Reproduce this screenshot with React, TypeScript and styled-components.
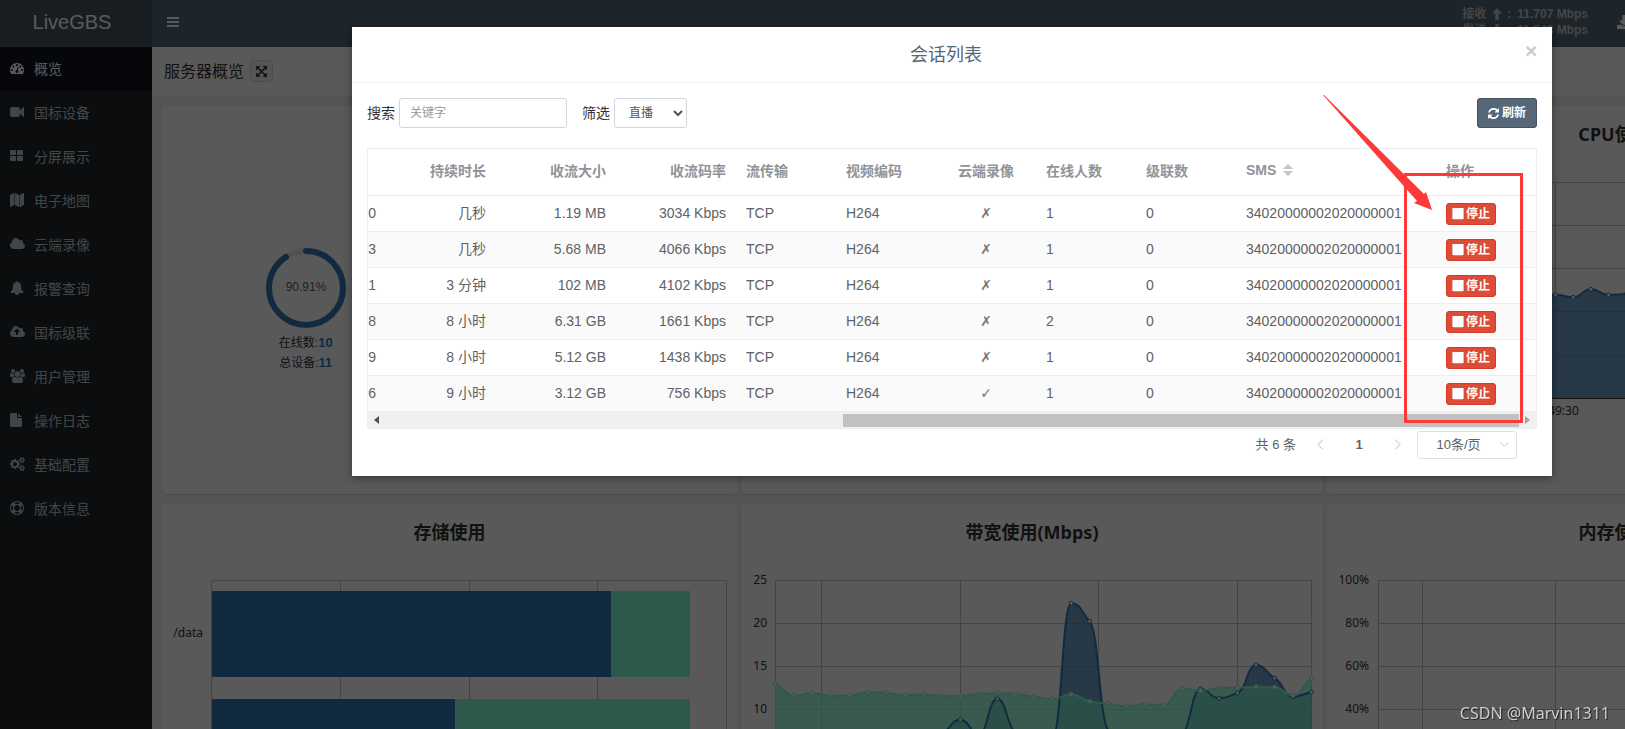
import React from 'react';
import styled, { createGlobalStyle } from 'styled-components';
import { FaDownload } from 'react-icons/fa';

const latin = '"Liberation Sans", "Noto Sans CJK SC", sans-serif';
const chartFont = '"Noto Sans", "Noto Sans CJK SC", sans-serif';

const Global = createGlobalStyle`
  *, *::before, *::after { box-sizing: border-box; }
  html, body { margin: 0; height: 100%; overflow: hidden; }
  body { font-family: ${latin}; font-size: 14px; color: #333; background: #ecf0f5; }
  h1, h2, h3, p { margin: 0; }
  button, input, select { font-family: inherit; }
`;

/* ---------- icons ---------- */

const paths = {
  dash: ['0 0 1792 1792', 'M384 1152q0-53-37.5-90.5t-90.5-37.5-90.5 37.5-37.5 90.5 37.5 90.5 90.5 37.5 90.5-37.5 37.5-90.5zm192-448q0-53-37.5-90.5t-90.5-37.5-90.5 37.5-37.5 90.5 37.5 90.5 90.5 37.5 90.5-37.5 37.5-90.5zm428 481l101-382q6-26-7.5-48.5t-38.5-29.5-48 6.5-30 39.5l-101 382q-60 5-107 43.5t-63 98.5q-20 77 20 146t117 89 146-20 89-117q16-60-6-117t-72-91zm660-33q0-53-37.5-90.5t-90.5-37.5-90.5 37.5-37.5 90.5 37.5 90.5 90.5 37.5 90.5-37.5 37.5-90.5zm-640-640q0-53-37.5-90.5t-90.5-37.5-90.5 37.5-37.5 90.5 37.5 90.5 90.5 37.5 90.5-37.5 37.5-90.5zm448 192q0-53-37.5-90.5t-90.5-37.5-90.5 37.5-37.5 90.5 37.5 90.5 90.5 37.5 90.5-37.5 37.5-90.5zm320 448q0 261-141 483-19 29-54 29h-1402q-35 0-54-29-141-221-141-483 0-182 71-348t191-286 286-191 348-71 348 71 286 191 191 286 71 348z'],
  video: ['0 0 1792 1792', 'M1792 352v1088q0 42-39 59-13 5-25 5-27 0-45-19l-403-403v166q0 119-84.5 203.5t-203.5 84.5h-704q-119 0-203.5-84.5t-84.5-203.5v-704q0-119 84.5-203.5t203.5-84.5h704q119 0 203.5 84.5t84.5 203.5v165l403-402q18-19 45-19 12 0 25 5 39 17 39 59z'],
  grid: ['0 0 1792 1792', 'M768 1024v384q0 52-38 90t-90 38h-512q-52 0-90-38t-38-90v-384q0-52 38-90t90-38h512q52 0 90 38t38 90zm0-768v384q0 52-38 90t-90 38h-512q-52 0-90-38t-38-90v-384q0-52 38-90t90-38h512q52 0 90 38t38 90zm896 768v384q0 52-38 90t-90 38h-512q-52 0-90-38t-38-90v-384q0-52 38-90t90-38h512q52 0 90 38t38 90zm0-768v384q0 52-38 90t-90 38h-512q-52 0-90-38t-38-90v-384q0-52 38-90t90-38h512q52 0 90 38t38 90z'],
  map: ['0 0 1792 1792', 'M512 0q13 0 22.5 9.5t9.5 22.5v1472q0 20-17 28l-480 256q-7 4-15 4-13 0-22.5-9.5t-9.5-22.5v-1472q0-20 17-28l480-256q7-4 15-4zm1248 0q13 0 22.5 9.5t9.5 22.5v1472q0 20-17 28l-480 256q-7 4-15 4-13 0-22.5-9.5t-9.5-22.5v-1472q0-20 17-28l480-256q7-4 15-4zm-1120 0q8 0 14 3l512 256q18 10 18 29v1472q0 13-9.5 22.5t-22.5 9.5q-8 0-14-3l-512-256q-18-10-18-29v-1472q0-13 9.5-22.5t22.5-9.5z'],
  cloud: ['64 0 1920 1792', 'M1984 1152q0 159-112.5 271.5t-271.5 112.5h-1088q-185 0-316.5-131.5t-131.5-316.5q0-132 71-241.5t187-163.5q-2-28-2-43 0-212 150-362t362-150q158 0 286.5 88t187.5 230q70-62 166-62 106 0 181 75t75 181q0 75-41 138 129 30 213 134.5t84 239.5z'],
  bell: ['0 0 1792 1792', 'M1728 1408q0 52-38 90t-90 38h-448q0 106-75 181t-181 75-181-75-75-181h-448q-52 0-90-38t-38-90q50-42 91-88t85-119.5 74.5-158.5 50-206 19.5-260q0-152 117-282.5t307-158.5q-8-19-8-39 0-40 28-68t68-28 68 28 28 68q0 20-8 39 190 28 307 158.5t117 282.5q0 139 19.5 260t50 206 74.5 158.5 85 119.5 91 88z'],
  upload: ['64 0 1920 1792', 'M1344 864q0-14-9-23l-352-352q-9-9-23-9t-23 9l-351 351q-10 12-10 24 0 14 9 23t23 9h224v352q0 13 9.5 22.5t22.5 9.5h192q13 0 22.5-9.5t9.5-22.5v-352h224q13 0 22.5-9.5t9.5-22.5zm640 288q0 159-112.5 271.5t-271.5 112.5h-1088q-185 0-316.5-131.5t-131.5-316.5q0-130 70-240t188-165q-2-30-2-43 0-212 150-362t362-150q156 0 285.5 87t188.5 231q71-62 166-62 106 0 181 75t75 181q0 76-41 138 130 31 213.5 135.5t83.5 238.5z'],
  users: ['0 0 1920 1792', 'M593 896q-162 5-265 128h-134q-82 0-138-40.5t-56-118.5q0-353 124-353 6 0 43.5 21t97.5 42.5 119 21.5q67 0 133-23-5 37-5 66 0 139 81 256zm1071 637q0 120-73 189.5t-194 69.5h-874q-121 0-194-69.5t-73-189.5q0-53 3.5-103.5t14-109 26.5-108.5 43-97.5 62-81 85.5-53.5 111.5-20q10 0 43 21.5t73 48 107 48 135 21.5 135-21.5 107-48 73-48 43-21.5q61 0 111.5 20t85.5 53.5 62 81 43 97.5 26.5 108.5 14 109 3.5 103.5zm-1024-1277q0 106-75 181t-181 75-181-75-75-181 75-181 181-75 181 75 75 181zm704 384q0 159-112.5 271.5t-271.5 112.5-271.5-112.5-112.5-271.5 112.5-271.5 271.5-112.5 271.5 112.5 112.5 271.5zm576 225q0 78-56 118.5t-138 40.5h-134q-103-123-265-128 81-117 81-256 0-29-5-66 66 23 133 23 59 0 119-21.5t97.5-42.5 43.5-21q124 0 124 353zm-128-609q0 106-75 181t-181 75-181-75-75-181 75-181 181-75 181 75 75 181z'],
  file: ['0 0 1792 1792', 'M1024 512v-472q22 14 36 28l408 408q14 14 28 36h-472zm-128 32q0 40 28 68t68 28h544v1056q0 40-28 68t-68 28h-1344q-40 0-68-28t-28-68v-1600q0-40 28-68t68-28h800v544z'],
  cogs: ['0 0 1920 1792', 'M896 896q0-106-75-181t-181-75-181 75-75 181 75 181 181 75 181-75 75-181zm768 512q0-52-38-90t-90-38-90 38-38 90q0 53 37.5 90.5t90.5 37.5 90.5-37.5 37.5-90.5zm0-1024q0-52-38-90t-90-38-90 38-38 90q0 53 37.5 90.5t90.5 37.5 90.5-37.5 37.5-90.5zm-384 421v185q0 10-7 19.5t-16 10.5l-155 24q-11 35-32 76 34 48 90 115 7 11 7 20 0 12-7 19-23 30-82.5 89.5t-78.5 59.5q-11 0-21-7l-115-90q-37 19-77 31-11 108-23 155-7 24-30 24h-186q-11 0-20-7.5t-10-17.5l-23-153q-34-10-75-31l-118 89q-7 7-20 7-11 0-21-8-144-133-144-160 0-9 7-19 10-14 41-53t47-61q-23-44-35-82l-152-24q-10-1-17-9.5t-7-19.5v-185q0-10 7-19.5t16-10.5l155-24q11-35 32-76-34-48-90-115-7-11-7-20 0-12 7-20 22-30 82-89t79-59q11 0 21 7l115 90q34-18 77-32 11-108 23-154 7-24 30-24h186q11 0 20 7.5t10 17.5l23 153q34 10 75 31l118-89q8-7 20-7 11 0 21 8 144 133 144 160 0 9-7 19-12 16-42 54t-45 60q23 48 34 82l152 23q10 2 17 10.5t7 19.5zm640 533v140q0 16-149 31-12 27-30 52 51 113 51 138 0 4-4 7-122 71-124 71-8 0-46-47t-52-68q-20 2-30 2t-30-2q-14 21-52 68t-46 47q-2 0-124-71-4-3-4-7 0-25 51-138-18-25-30-52-149-15-149-31v-140q0-16 149-31 13-29 30-52-51-113-51-138 0-4 4-7 4-2 35-20t59-34 30-16q8 0 46 46.5t52 67.5q20-2 30-2t30 2q51-71 92-112l6-2q4 0 124 70 4 3 4 7 0 25-51 138 17 23 30 52 149 15 149 31zm0-1024v140q0 16-149 31-12 27-30 52 51 113 51 138 0 4-4 7-122 71-124 71-8 0-46-47t-52-68q-20 2-30 2t-30-2q-14 21-52 68t-46 47q-2 0-124-71-4-3-4-7 0-25 51-138-18-25-30-52-149-15-149-31v-140q0-16 149-31 13-29 30-52-51-113-51-138 0-4 4-7 4-2 35-20t59-34 30-16q8 0 46 46.5t52 67.5q20-2 30-2t30 2q51-71 92-112l6-2q4 0 124 70 4 3 4 7 0 25-51 138 17 23 30 52 149 15 149 31z'],
  ring: ['0 0 1792 1792', 'M896 0q182 0 348 71t286 191 191 286 71 348-71 348-191 286-286 191-348 71-348-71-286-191-191-286-71-348 71-348 191-286 286-191 348-71zm0 128q-190 0-361 90l194 194q82-28 167-28t167 28l194-194q-171-90-361-90zm-678 1129l194-194q-28-82-28-167t28-167l-194-194q-90 171-90 361t90 361zm678 407q190 0 361-90l-194-194q-82 28-167 28t-167-28l-194 194q171 90 361 90zm0-384q159 0 271.5-112.5t112.5-271.5-112.5-271.5-271.5-112.5-271.5 112.5-112.5 271.5 112.5 271.5 271.5 112.5zm484-217l194 194q90-171 90-361t-90-361l-194 194q28 82 28 167t-28 167z'],
  refresh: ['128 0 1536 1792', 'M1639 1056q0 5-1 7-64 268-268 434.5t-478 166.5q-146 0-282.5-55t-243.5-157l-129 129q-19 19-45 19t-45-19-19-45v-448q0-26 19-45t45-19h448q26 0 45 19t19 45-19 45l-137 137q71 66 161 102t187 36q134 0 250-65t186-179q11-17 53-117 8-23 30-23h192q13 0 22.5 9.5t9.5 22.5zm25-800v448q0 26-19 45t-45 19h-448q-26 0-45-19t-19-45 19-45l138-138q-148-137-349-137-134 0-250 65t-186 179q-11 17-53 117-8 23-30 23h-199q-13 0-22.5-9.5t-9.5-22.5v-7q65-268 270-434.5t480-166.5q146 0 284 55.5t245 156.5l130-129q19-19 45-19t45 19 19 45z'],
  expand: ['128 0 1536 1792', 'M1411 541l-355 355 355 355 144-144q29-31 70-14 39 17 39 59v448q0 26-19 45t-45 19h-448q-42 0-59-40-17-39 14-69l144-144-355-355-355 355 144 144q31 30 14 69-17 40-59 40h-448q-26 0-45-19t-19-45v-448q0-42 40-59 39-17 69 14l144 144 355-355-355-355-144 144q-19 19-45 19-12 0-24-5-40-17-40-59v-448q0-26 19-45t45-19h448q42 0 59 40 17 39-14 69l-144 144 355 355 355-355-144-144q-31-30-14-69 17-40 59-40h448q26 0 45 19t19 45v448q0 42-39 59-13 5-25 5-26 0-45-19z'],
  bars: ['0 0 12 14', 'M0 2h12v2H0zM0 6h12v2H0zM0 10h12v2H0z'],
  up: ['0 0 10 12', 'M5 0l5 5.6H6.8V12H3.2V5.6H0z'],
  down: ['0 0 10 12', 'M5 12l5-5.6H6.8V0H3.2v6.4H0z'],
  stop: ['0 0 12 14', 'M1 1h10a.6.6 0 0 1 .6.6v10a.6.6 0 0 1-.6.6H1a.6.6 0 0 1-.6-.6v-10A.6.6 0 0 1 1 1z'],
} as const;

type IconName = keyof typeof paths;

const IconSvg = styled.svg<{ $h: number }>`
  display: block;
  flex: none;
  height: ${(p) => p.$h}px;
  width: auto;
  fill: currentColor;
`;

const Icon = ({ name, size = 14 }: { name: IconName; size?: number }) => {
  const [box, d] = paths[name];
  return (
    <IconSvg viewBox={box} $h={size} aria-hidden="true">
      <path d={d} />
    </IconSvg>
  );
};

/* ---------- shell ---------- */

const Shell = styled.div`
  position: relative;
  display: grid;
  grid-template-columns: 152px 1fr;
  min-width: 1904px;
  height: 100vh;
  overflow: hidden;
`;

const Sidebar = styled.aside`
  background: #20272b;
`;

const Logo = styled.a`
  display: flex;
  align-items: center;
  justify-content: center;
  height: 47px;
  padding: 0 14px 3px 6px;
  background: #455361;
  color: #fff;
  font-size: 20px;
  text-decoration: none;
`;

const NavItem = styled.a<{ $active?: boolean }>`
  display: flex;
  align-items: center;
  height: 44px;
  padding: 0 10px 2px;
  text-decoration: none;
  color: ${(p) => (p.$active ? '#fff' : '#b8c7ce')};
  background: ${(p) => (p.$active ? '#121620' : 'transparent')};
`;

const NavIcon = styled.span`
  width: 24px;
`;

const Content = styled.div`
  display: flex;
  flex-direction: column;
  min-width: 0;
`;

const TopBar = styled.header`
  display: flex;
  flex: none;
  align-items: center;
  justify-content: space-between;
  height: 47px;
  padding: 0 273px 4px 15px;
  background: #556979;
  color: #fff;
`;

const PlainButton = styled.button`
  display: flex;
  padding: 0;
  border: 0;
  background: none;
  color: inherit;
`;

const TopRight = styled.div`
  display: flex;
  align-items: center;
  gap: 29px;
`;

const Rates = styled.div`
  display: grid;
  grid-template-columns: 30px 15px 10px auto;
  align-items: center;
  font-size: 12px;
  font-weight: bold;
  line-height: 16px;
  color: #c3c6c9;
`;

const TitleBar = styled.div`
  display: flex;
  flex: none;
  align-items: center;
  gap: 6px;
  height: 49px;
  padding: 0 12px 1px;
  background: #fff;
`;

const PageTitle = styled.h1`
  padding-bottom: 2px;
  font-size: 16px;
  font-weight: normal;
`;

const ExpandButton = styled.button`
  display: flex;
  align-items: center;
  justify-content: center;
  width: 23px;
  height: 22px;
  padding: 0;
  border: 1px solid #ddd;
  border-radius: 3px;
  background: #f4f4f4;
  color: #444;
`;

const Cards = styled.main`
  display: grid;
  grid-template-columns: 115fr 116fr 115fr;
  grid-auto-rows: 388px;
  gap: 10px 5px;
  padding: 10px 2px 10px 10px;
`;

const Card = styled.section`
  border-radius: 4px;
  background: #fff;
  box-shadow: 0 1px 1px rgba(0, 0, 0, 0.1);
  overflow: hidden;
`;

const CardTitle = styled.h2`
  height: 46px;
  padding-top: 16px;
  font-family: ${chartFont};
  font-size: 18px;
  line-height: 24px;
  font-weight: bold;
  text-align: center;
`;

const ChartSvg = styled.svg`
  display: block;
  width: 100%;
  font-family: ${chartFont};
  font-size: 12px;
  fill: #333;
`;

const Gauges = styled.div`
  display: grid;
  grid-template-columns: 1fr 1fr;
  padding-top: 142px;
`;

const Gauge = styled.div`
  display: flex;
  flex-direction: column;
  align-items: center;
  font-size: 12px;
  line-height: 20px;
`;

const GaugeSvg = styled.svg`
  display: block;
  width: 80px;
  height: 80px;
  margin-bottom: 5px;
  font-size: 12px;
  fill: #606266;
`;

const Count = styled.b`
  color: #337ab7;
  font-size: 13px;
`;

/* ---------- dialog ---------- */

const Backdrop = styled.div`
  position: absolute;
  inset: 0;
  background: rgba(0, 0, 0, 0.65);
`;

const Dialog = styled.div`
  position: relative;
  width: 1200px;
  max-width: 90%;
  margin: 27px auto 0;
  background: #fff;
  box-shadow: 0 2px 8px rgba(0, 0, 0, 0.4);
`;

const DialogHead = styled.div`
  display: flex;
  height: 56px;
  padding: 15px;
  border-bottom: 1px solid #f0f0f2;
`;

const DialogTitle = styled.h2`
  flex: 1;
  font-size: 18px;
  line-height: 26px;
  font-weight: normal;
  text-align: center;
  color: #566778;
`;

const CloseButton = styled.button`
  display: flex;
  justify-content: center;
  width: 12px;
  height: 18px;
  padding: 0;
  border: 0;
  background: none;
  color: #ccc;
  font-size: 21px;
  line-height: 18px;
  font-weight: bold;
`;

const DialogBody = styled.div`
  padding: 15px 15px 17px;
`;

const Toolbar = styled.form`
  display: flex;
  align-items: center;
  gap: 15px;
  margin-bottom: 20px;
`;

const Field = styled.label`
  display: flex;
  align-items: center;
  gap: 4px;
`;

const FieldText = styled.span`
  padding-bottom: 3px;
`;

const TextInput = styled.input`
  width: 168px;
  height: 30px;
  padding: 5px 10px;
  border: 1px solid #d2d6de;
  border-radius: 3px;
  font-size: 12px;
  &::placeholder { color: #999; }
`;

const FilterSelect = styled.select`
  width: 73px;
  height: 30px;
  padding: 5px 10px;
  border: 1px solid #d2d6de;
  border-radius: 3px;
  background-color: #fff;
  color: #555;
  font-size: 12px;
`;

const ActionButton = styled.button<{ $danger?: boolean }>`
  display: inline-flex;
  align-items: center;
  justify-content: center;
  gap: ${(p) => (p.$danger ? 2 : 3)}px;
  width: ${(p) => (p.$danger ? 50 : 60)}px;
  height: ${(p) => (p.$danger ? 22 : 30)}px;
  padding: 0;
  margin-left: ${(p) => (p.$danger ? '0' : 'auto')};
  border: 1px solid ${(p) => (p.$danger ? '#d73925' : '#44515e')};
  border-radius: 3px;
  background: ${(p) => (p.$danger ? '#dd4b39' : '#566778')};
  color: #fff;
  font-size: 12px;
  line-height: 18px;
  font-weight: bold;
  vertical-align: middle;
`;

const TableFrame = styled.div`
  border: 1px solid #ebeef5;
`;

const Table = styled.table`
  width: 100%;
  table-layout: fixed;
  border-collapse: separate;
  border-spacing: 0;
  color: #606266;
`;

const Row = styled.tr`
  &:nth-child(even) { background: #fafafa; }
`;

const HeadCell = styled.th<{ $align?: string }>`
  height: 47px;
  padding: 0 10px 4px;
  border-bottom: 1px solid #ebeef5;
  color: #909399;
  text-align: ${(p) => p.$align || 'left'};
  white-space: nowrap;
`;

const Cell = styled.td<{ $align?: string; $cut?: boolean }>`
  height: 36px;
  padding: ${(p) => (p.$cut ? '0 10px 0 0' : '0 10px')};
  border-bottom: 1px solid #ebeef5;
  line-height: 23px;
  text-align: ${(p) => p.$align || 'left'};
  white-space: nowrap;
`;

const Mark = styled.span`
  font-family: "DejaVu Sans", sans-serif;
  color: #75777b;
`;

const SortHead = styled.span`
  display: inline-flex;
  align-items: center;
  gap: 7px;
`;

const ScrollBar = styled.div`
  display: grid;
  grid-template-columns: 17px 458fr 676fr 17px;
  align-items: center;
  height: 16px;
  background: #f0f0f0;
`;

const ScrollThumb = styled.div`
  grid-column: 3;
  height: 13px;
  background: #c1c1c1;
`;

const ScrollArrow = styled.svg<{ $tone: string }>`
  justify-self: center;
  width: 5px;
  height: 8px;
  fill: ${(p) => p.$tone};
`;

const Pager = styled.nav`
  display: flex;
  align-items: center;
  justify-content: flex-end;
  height: 28px;
  margin-top: 2px;
  padding-right: 20px;
  font-size: 13px;
  color: #606266;
`;

const PageButton = styled.button<{ $current?: boolean }>`
  display: flex;
  align-items: center;
  justify-content: center;
  width: ${(p) => (p.$current ? 48 : 29)}px;
  height: 28px;
  padding: 0 0 2px;
  border: 0;
  background: none;
  color: ${(p) => (p.$current ? '#566778' : '#b4b8c0')};
  font-size: 13px;
  font-weight: bold;
`;

const PagerTotal = styled.span`
  margin-right: 10px;
  padding-bottom: 3px;
`;

const SizePick = styled.div`
  position: relative;
  margin-left: 5px;
`;

const SizeSelect = styled.select`
  display: block;
  width: 100px;
  height: 28px;
  padding: 0 25px 2px 8px;
  appearance: none;
  border: 1px solid #dcdfe6;
  border-radius: 3px;
  background: #fff;
  color: #606266;
  font-size: 13px;
  text-align: center;
  text-align-last: center;
`;

const SizeChevron = styled.svg`
  position: absolute;
  right: 8px;
  top: 11px;
  width: 9px;
  height: 6px;
  fill: none;
  stroke: #c0c4cc;
  pointer-events: none;
`;

const Marking = styled.svg`
  position: absolute;
  top: 66px;
  right: 28px;
  width: 202px;
  height: 332px;
  pointer-events: none;
`;

const Watermark = styled.span`
  position: fixed;
  right: 15px;
  bottom: 4px;
  color: #cdcdcd;
  font-family: "Noto Sans", sans-serif;
  font-size: 16px;
  line-height: 24px;
  text-shadow: 1px 1px 1px #222;
`;

/* ---------- charts ---------- */

type Pt = [number, number];

/* Curve that is monotone between points, so peaks never overshoot. */
const smooth = (p: Pt[]) => {
  const n = p.length;
  const s = p.slice(1).map((q, i) => (q[1] - p[i][1]) / (q[0] - p[i][0]));
  const m = p.map((_, i) => {
    if (i === 0) return s[0];
    if (i === n - 1) return s[n - 2];
    const a = s[i - 1];
    const b = s[i];
    return a * b <= 0 ? 0 : (2 * a * b) / (a + b);
  });
  let d = `M${p[0][0]} ${p[0][1]}`;
  for (let i = 1; i < n; i++) {
    const dx = p[i][0] - p[i - 1][0];
    const h = dx / 2;
    const k = dx / 3;
    d += `C${p[i - 1][0] + h} ${p[i - 1][1] + m[i - 1] * k} ${p[i][0] - h} ${p[i][1] - m[i] * k} ${p[i][0]} ${p[i][1]}`;
  }
  return d;
};

type SeriesData = { pts: Pt[]; color: string };

/* All areas lie under all lines. */
const SeriesSet = ({ items, base }: { items: SeriesData[]; base: number }) => (
  <g>
    {items.map(({ pts, color }) => (
      <path key={color} d={`${smooth(pts)}V${base}H${pts[0][0]}Z`} fill={color} fillOpacity={0.7} />
    ))}
    {items.map(({ pts, color }) => (
      <g key={color} stroke={color}>
        <path d={smooth(pts)} fill="none" strokeWidth={2} />
        {pts.map(([x, y]) => (
          <circle key={x} cx={x} cy={y} r={2} fill="#fff" />
        ))}
      </g>
    ))}
  </g>
);

const GridLines = ({ xs, ys }: { xs: number[]; ys: number[] }) => (
  <g stroke="#c4c4c4" shapeRendering="crispEdges">
    {ys.map((y) => (
      <line key={`h${y}`} x1={xs[0]} x2={xs[xs.length - 1]} y1={y} y2={y} />
    ))}
    {xs.map((x) => (
      <line key={`v${x}`} x1={x} x2={x} y1={ys[0]} y2={ys[ys.length - 1]} />
    ))}
  </g>
);

const gridY = [30.5, 73.5, 116.5, 159.5, 203.5, 246.5];

const YLabels = ({ x, labels }: { x: number; labels: string[] }) => (
  <g textAnchor="end">
    {labels.map((t, i) => (
      <text key={t} x={x} y={gridY[i] + 3}>{t}</text>
    ))}
  </g>
);

const recv = [684, 695.7, 693, 696, 695.7, 692.3, 693, 695.3, 694.3, 696, 696, 694, 693, 694.3, 696.7, 699, 694.3, 701.3, 703.7, 706.3, 704, 705.3, 689, 690.7, 688, 687.7, 686.7, 687.3, 695.3, 678.3];
const send = [745, 740, 750, 744, 738, 742, 748, 750, 741, 733, 719.7, 734, 699, 733, 745, 737, 603.3, 621.3, 731, 760, 764, 752, 735, 689, 698.3, 693, 665, 678, 696.7, 692.3];
const toBandwidth = (v: number[]): Pt[] => v.map((y, i) => [33.5 + (i * 536) / 29, y - 550]);

const cpuPts: Pt[] = [290, 292, 296, 291, 294, 297, 292, 290, 293, 296, 294.7, 297.3, 289.3, 295, 294, 291, 296, 293, 290, 292, 295, 293, 297, 291, 293, 294, 290, 295, 292, 293].map(
  (y, i) => [51.5 + i * 17.7, y - 152],
);

const StorageChart = () => (
  <ChartSvg viewBox="0 0 575 342">
    <GridLines xs={[49.5, 178.5, 307.5, 435.5, 564.5]} ys={[30.5, 246.5]} />
    <rect x={50} y={41} width={399} height={86} fill="#337ab7" />
    <rect x={449} y={41} width={79} height={86} fill="#7fffd4" />
    <rect x={50} y={149} width={243} height={86} fill="#337ab7" />
    <rect x={293} y={149} width={235} height={86} fill="#7fffd4" />
    <text x={41} y={87} textAnchor="end">/data</text>
  </ChartSvg>
);

const BandwidthChart = () => (
  <ChartSvg viewBox="0 0 580 342">
    <GridLines xs={[33.5, 79.5, 218.5, 356.5, 495.5, 569.5]} ys={gridY} />
    <YLabels x={25} labels={['25', '20', '15', '10']} />
    <SeriesSet
      base={246.5}
      items={[
        { pts: toBandwidth(send), color: '#337ab7' },
        { pts: toBandwidth(recv), color: '#7fffd4' },
      ]}
    />
  </ChartSvg>
);

const PercentChart = ({ pts, labels = [], time }: { pts?: Pt[]; labels?: string[]; time?: string }) => (
  <ChartSvg viewBox="0 0 575 342">
    <GridLines xs={[51.5, 95.5, 228.5, 361.5, 494.5, 564.5]} ys={gridY} />
    <YLabels x={42} labels={labels} />
    {pts && <SeriesSet base={246.5} items={[{ pts, color: '#337ab7' }]} />}
    <line x1={51} x2={565} y1={246.5} y2={246.5} stroke="#333" />
    {time && <text x={228} y={263} textAnchor="middle">{time}</text>}
  </ChartSvg>
);

/* ---------- data ---------- */

const nav: [IconName, string][] = [
  ['dash', '概览'],
  ['video', '国标设备'],
  ['grid', '分屏展示'],
  ['map', '电子地图'],
  ['cloud', '云端录像'],
  ['bell', '报警查询'],
  ['upload', '国标级联'],
  ['users', '用户管理'],
  ['file', '操作日志'],
  ['cogs', '基础配置'],
  ['ring', '版本信息'],
];

const sessions: string[][] = [
  ['0', '几秒', '1.19 MB', '3034 Kbps', '✗', '1'],
  ['3', '几秒', '5.68 MB', '4066 Kbps', '✗', '1'],
  ['1', '3 分钟', '102 MB', '4102 Kbps', '✗', '1'],
  ['8', '8 小时', '6.31 GB', '1661 Kbps', '✗', '2'],
  ['9', '8 小时', '5.12 GB', '1438 Kbps', '✗', '1'],
  ['6', '9 小时', '3.12 GB', '756 Kbps', '✓', '1'],
];

const SessionTable = () => (
  <Table>
    <colgroup>
      {[18, 110, 120, 120, 100, 100, 100, 100, 100, 200, 100].map((w, i) => (
        <col key={i} width={w} />
      ))}
    </colgroup>
    <thead>
      <tr>
        <HeadCell />
        <HeadCell $align="right">持续时长</HeadCell>
        <HeadCell $align="right">收流大小</HeadCell>
        <HeadCell $align="right">收流码率</HeadCell>
        <HeadCell>流传输</HeadCell>
        <HeadCell>视频编码</HeadCell>
        <HeadCell $align="center">云端录像</HeadCell>
        <HeadCell>在线人数</HeadCell>
        <HeadCell>级联数</HeadCell>
        <HeadCell>
          <SortHead>
            SMS
            <svg width="10" height="12" viewBox="0 0 10 12" fill="#c0c4cc" aria-hidden="true">
              <path d="M5 0l5 5H0zM5 12l5-5H0z" />
            </svg>
          </SortHead>
        </HeadCell>
        <HeadCell>操作</HeadCell>
      </tr>
    </thead>
    <tbody>
      {sessions.map(([tail, time, size, rate, rec, online]) => (
        <Row key={tail}>
          <Cell $cut $align="right">{tail}</Cell>
          <Cell $align="right">{time}</Cell>
          <Cell $align="right">{size}</Cell>
          <Cell $align="right">{rate}</Cell>
          <Cell>TCP</Cell>
          <Cell>H264</Cell>
          <Cell $align="center"><Mark>{rec}</Mark></Cell>
          <Cell>{online}</Cell>
          <Cell>0</Cell>
          <Cell>34020000002020000001</Cell>
          <Cell>
            <ActionButton type="button" $danger>
              <Icon name="stop" size={14} />停止
            </ActionButton>
          </Cell>
        </Row>
      ))}
    </tbody>
  </Table>
);

const Chevron = ({ d }: { d: string }) => (
  <svg width="7" height="11" viewBox="0 0 7 11" fill="none" stroke="currentColor" aria-hidden="true">
    <path d={d} />
  </svg>
);

export default function App() {
  return (
    <>
      <Global />
      <Shell>
        <Sidebar>
          <Logo href="#">LiveGBS</Logo>
          <nav>
            {nav.map(([icon, text], i) => (
              <NavItem key={text} href="#" $active={i === 0}>
                <NavIcon><Icon name={icon} /></NavIcon>
                {text}
              </NavItem>
            ))}
          </nav>
        </Sidebar>
        <Content>
          <TopBar>
            <PlainButton aria-label="菜单"><Icon name="bars" size={14} /></PlainButton>
            <TopRight>
              <Rates>
                <span>接收</span><Icon name="up" size={12} /><span>:</span><span>11.707 Mbps</span>
                <span>发送</span><Icon name="down" size={12} /><span>:</span><span>11.548 Mbps</span>
              </Rates>
              <PlainButton aria-label="下载"><FaDownload size={14} /></PlainButton>
            </TopRight>
          </TopBar>
          <TitleBar>
            <PageTitle>服务器概览</PageTitle>
            <ExpandButton aria-label="全屏"><Icon name="expand" size={13} /></ExpandButton>
          </TitleBar>
          <Cards>
            <Card>
              <Gauges>
                <Gauge>
                  <GaugeSvg viewBox="0 0 80 80">
                    <circle cx="40" cy="40" r="37" fill="none" stroke="#e5e9f2" strokeWidth="6" />
                    <circle
                      cx="40" cy="40" r="37" fill="none" stroke="#337ab7" strokeWidth="6"
                      strokeLinecap="round" pathLength={100} strokeDasharray="90.91 100"
                      transform="rotate(-90 40 40)"
                    />
                    <text x="40" y="43" textAnchor="middle">90.91%</text>
                  </GaugeSvg>
                  <p>在线数:<Count>10</Count></p>
                  <p>总设备:<Count>11</Count></p>
                </Gauge>
              </Gauges>
            </Card>
            <Card />
            <Card>
              <CardTitle>CPU使用</CardTitle>
              <PercentChart pts={cpuPts} time="09:49:30" />
            </Card>
            <Card>
              <CardTitle>存储使用</CardTitle>
              <StorageChart />
            </Card>
            <Card>
              <CardTitle>带宽使用(Mbps)</CardTitle>
              <BandwidthChart />
            </Card>
            <Card>
              <CardTitle>内存使用</CardTitle>
              <PercentChart labels={['100%', '80%', '60%', '40%']} />
            </Card>
          </Cards>
        </Content>
        <Backdrop>
          <Dialog role="dialog" aria-labelledby="session-title">
            <DialogHead>
              <DialogTitle id="session-title">会话列表</DialogTitle>
              <CloseButton aria-label="关闭">×</CloseButton>
            </DialogHead>
            <DialogBody>
              <Toolbar onSubmit={(e) => e.preventDefault()}>
                <Field>
                  <FieldText>搜索</FieldText>
                  <TextInput type="text" placeholder="关键字" />
                </Field>
                <Field>
                  <FieldText>筛选</FieldText>
                  <FilterSelect defaultValue="直播"><option>直播</option></FilterSelect>
                </Field>
                <ActionButton type="submit"><Icon name="refresh" size={13} />刷新</ActionButton>
              </Toolbar>
              <TableFrame>
                <SessionTable />
                <ScrollBar>
                  <ScrollArrow viewBox="0 0 5 8" $tone="#505050"><path d="M5 0v8L0 4z" /></ScrollArrow>
                  <ScrollThumb />
                  <ScrollArrow viewBox="0 0 5 8" $tone="#a3a3a3"><path d="M0 0v8l5-4z" /></ScrollArrow>
                </ScrollBar>
              </TableFrame>
              <Pager aria-label="分页">
                <PagerTotal>共 6 条</PagerTotal>
                <PageButton aria-label="上一页"><Chevron d="M6 .5L1 5.5l5 5" /></PageButton>
                <PageButton $current>1</PageButton>
                <PageButton aria-label="下一页"><Chevron d="M1 .5l5 5-5 5" /></PageButton>
                <SizePick>
                  <SizeSelect aria-label="每页条数" defaultValue="10条/页"><option>10条/页</option></SizeSelect>
                  <SizeChevron viewBox="0 0 9 6"><path d="M.5.5l4 4 4-4" /></SizeChevron>
                </SizePick>
              </Pager>
            </DialogBody>
            <Marking viewBox="0 0 202 332" aria-hidden="true">
              <rect x="83.5" y="81.5" width="116" height="247" fill="none" stroke="#fd3a39" strokeWidth="3" />
              <path d="M1 2L2 2 102 101 104 99 110 117 92 110 95 108z" fill="#fd3a39" />
            </Marking>
          </Dialog>
        </Backdrop>
      </Shell>
      <Watermark>CSDN @Marvin1311</Watermark>
    </>
  );
}
